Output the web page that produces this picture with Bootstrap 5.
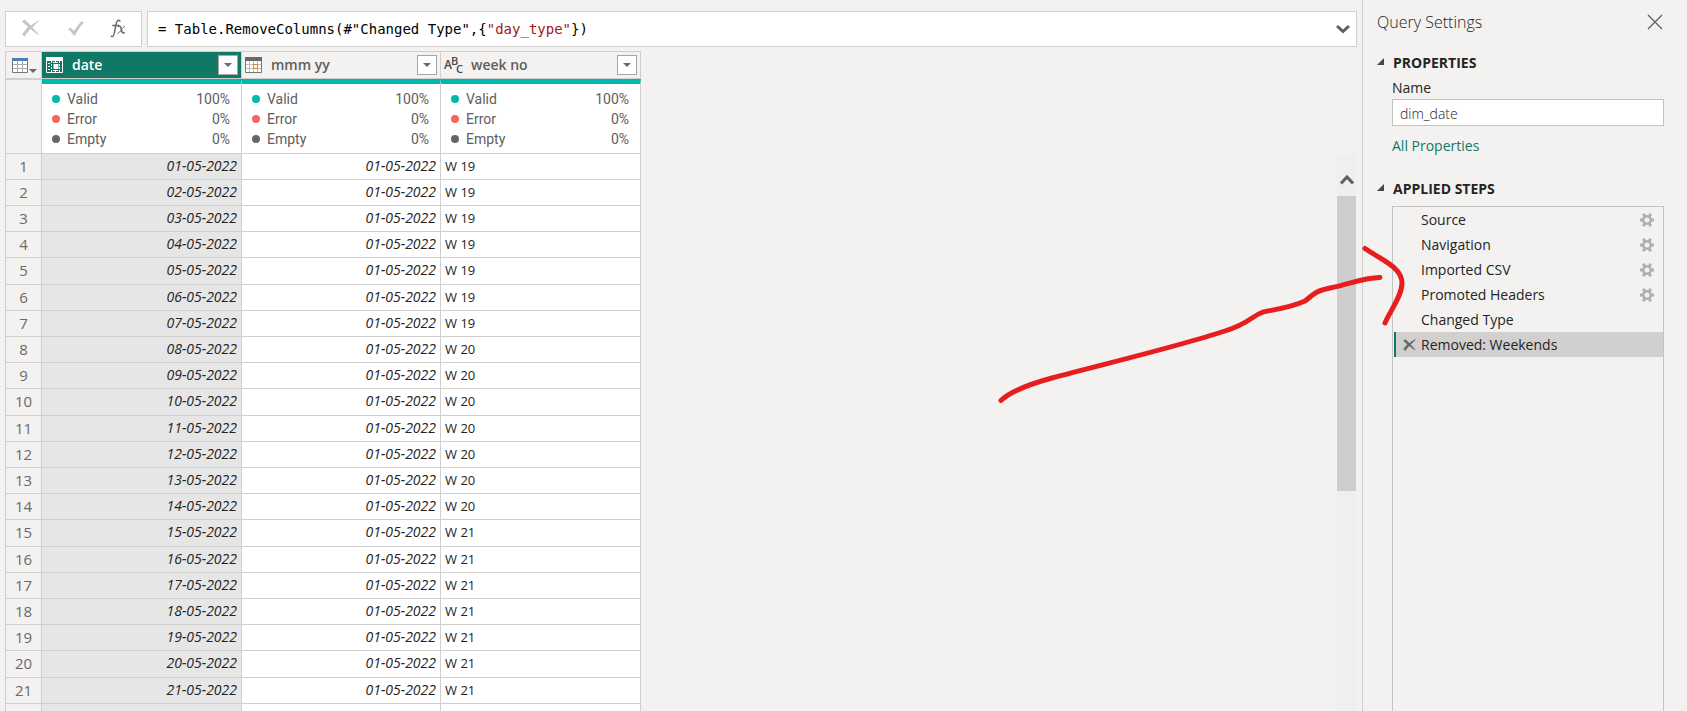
<!DOCTYPE html>
<html lang="en">
<head>
<meta charset="utf-8">
<meta name="viewport" content="width=device-width, initial-scale=1">
<title>Query Editor</title>
<link href="https://cdn.jsdelivr.net/npm/bootstrap@5.3.0/dist/css/bootstrap.min.css" rel="stylesheet">
<style>
  :root { --line: #d0cfcd; --pane: #f3f2f1; --green: #117865; --teal: #01b8aa; }
  body { background: var(--pane); font-family: "Open Sans", "Noto Sans", sans-serif; font-size: 14px; line-height: 20px; color: #252423; }
  svg { display: block; }
  .bare { border: 0; padding: 0; background: none; }

  /* Formula bar */
  .editor { padding: 11px 5px 0; }
  .bar { height: 36px; background: #fff; border: 1px solid var(--line); }
  .bar-tools { width: 137px; padding: 0 15px 2px; }
  .bar-formula { padding: 0 6px 0 10px; font: 14px/20px "DejaVu Sans Mono", monospace; color: #000; white-space: nowrap; }
  .str { color: #a31515; }

  /* Data grid */
  .data-grid { width: 636px; table-layout: fixed; border-collapse: separate; border-spacing: 0; font-size: 13px; border-left: 1px solid var(--line); }
  .data-grid th, .data-grid td { padding: 0; border-right: 1px solid var(--line); border-bottom: 1px solid var(--line); }
  .data-grid thead th { height: 28px; border-top: 1px solid var(--line); background: var(--pane); font-size: 14px; font-weight: 600; color: #605e5c; }
  .data-grid thead th.picked { background: var(--green); color: #fff; }
  .c-num { width: 36px; } .c-date { width: 200px; } .c-month { width: 199px; }
  .head { height: 26px; padding: 0 3px 0 4px; }
  .head-name { margin-left: 9px; }
  .drop { width: 20px; height: 20px; background: #fff; border: 1px solid #a6a6a6; padding: 0; }
  .data-grid .num { background: var(--pane); text-align: center; font-size: 15px; font-weight: 400; color: #6b6967; }
  .data-grid tbody td { height: 26px; line-height: 22px; background: #fff; padding: 0 4px 2px; }
  .data-grid tbody tr:nth-child(5n) td { height: 27px; }
  .data-grid tbody td.date { text-align: right; font-style: italic; font-size: 14px; }
  .data-grid tbody td.picked { background: #e6e6e6; }
  .data-grid .quality { background: #fff; vertical-align: top; border-top: 5px solid var(--teal); }
  .quality ul { padding: 5px 11px 4px 10px; font: 14px/20px Roboto, sans-serif; color: #605e5c; }
  .dot { width: 8px; height: 8px; margin-right: 7px; }
  .d-ok { background: var(--teal); } .d-err { background: #fd625e; } .d-empty { background: #666; }

  /* Scroll bar */
  .scroller { width: 19px; margin: 103px 1px 0 0; background: #efefef; }
  .thumb { height: 295px; background: #cdcdcd; }

  /* Query settings */
  .settings { width: 325px; border-left: 1px solid var(--line); padding: 11px 23px 0 14px; }
  .settings h1 { font-size: 16px; line-height: 22px; font-weight: 300; }
  .settings h2 { font-size: 14px; line-height: 22px; font-weight: 700; gap: 9px; }
  .settings h2 svg { margin-bottom: 4px; }
  .indent { margin-left: 15px; }
  .name-box { height: 27px; border: 1px solid #c3c2c0; border-radius: 0; padding: 2px 7px 0; font-size: 14px; font-weight: 300; color: #252423; }
  .settings a { color: var(--green); text-decoration: none; }
  .steps { border: 1px solid #c3c2c0; border-bottom: 0; }
  .steps li { height: 25px; padding: 0 9px 0 28px; }
  .steps li.now { background: #d2d0ce; border-left: 2px solid var(--green); margin-left: 1px; padding-left: 7px; }
  .steps li.now .bare { width: 18px; }

  .ink { right: 279px; top: 240px; pointer-events: none; }
</style>
</head>
<body>
<svg width="0" height="0" class="position-absolute" aria-hidden="true">
  <symbol id="gear" viewBox="0 0 14 14">
    <circle cx="7" cy="7" r="3.800" fill="none" stroke="#b0afad" stroke-width="2.600"/>
    <path stroke="#b0afad" stroke-width="3" d="M0 7h2.500M11.500 7H14M3.300 .8l1.400 2.400M10.700 .8L9.300 3.200M3.300 13.200l1.400-2.400M10.700 13.200l-1.400-2.400"/>
  </symbol>
  <symbol id="caret" viewBox="0 0 8 4"><path fill="#6b6967" d="M0 0h8L4 4z"/></symbol>
  <symbol id="fold" viewBox="0 0 7 7"><path fill="#4a4846" d="M7 0v7H0z"/></symbol>
</svg>

<div class="d-flex vh-100 overflow-hidden position-relative">
  <main class="editor flex-grow-1 d-flex flex-column overflow-hidden">
    <div class="d-flex flex-shrink-0" style="gap:5px">
      <div class="bar bar-tools d-flex align-items-center justify-content-between">
        <button class="bare" aria-label="Cancel"><svg width="20" height="18" viewBox="0 0 20 18"><path fill="#c8c6c4" d="M1 2.500L3.500 0.500C6 2.500 8 4.500 10 6.500C13 4 16 2 19 1C16 3.500 13.500 6 11.500 8.500C14 11 16 13.500 18.500 16.500C15 14.500 12 12 9.500 10C7 12.500 5 15 3.500 17.500L1 15.500C3 12.500 5 10.500 7 8C5 6 3 4.500 1 2.500z"/></svg></button>
        <button class="bare" aria-label="Accept"><svg width="18" height="16" viewBox="0 0 18 16"><path fill="#c8c6c4" d="M1 9L3.500 7.500L7 11C9.500 7 12 3.500 15 1L17 2.500C13 6.500 10.500 10.500 8 15.500L6.500 15.500C5 13 3.500 11 1 9z"/></svg></button>
        <button class="bare" aria-label="Insert function"><svg width="16" height="19" viewBox="0 0 16 19" fill="none" stroke="#666" stroke-linecap="round"><path stroke-width="1.400" d="M10 2C8.500 0.400 7 1.200 6.400 4L4.300 14C3.800 17 2.500 18 1.200 17.200M2.800 6.500H8.500"/><path stroke-width="1.500" d="M8.600 7.500C10.600 6.400 10.800 8 11.300 10.500C12 13.500 12.400 14.800 14.200 13.600"/><path d="M14.500 7.300C12.800 7.200 10.500 14.200 7.800 14.200"/></svg></button>
      </div>
      <div class="bar bar-formula flex-grow-1 d-flex align-items-center justify-content-between">
        <span>= Table.RemoveColumns(#"Changed Type",{<span class="str">"day_type"</span>})</span>
        <button class="bare" aria-label="Expand formula bar"><svg width="14" height="10" viewBox="0 0 14 10"><path d="M1 2l6 5.500L13 2" fill="none" stroke="#605e5c" stroke-width="3"/></svg></button>
      </div>
    </div>
    <div class="flex-grow-1 d-flex justify-content-between overflow-hidden" style="padding-top:4px">
      <div>
        <table class="data-grid">
          <colgroup><col class="c-num"><col class="c-date"><col class="c-month"><col></colgroup>
          <thead>
            <tr>
              <th><button class="bare d-flex align-items-end" style="gap:1px;padding-left:6px" aria-label="Table menu"><svg width="16" height="15" viewBox="0 0 16 15"><path fill="#fff" stroke="#777" d="M.5.5h15v14H.5z"/><path stroke="#aaa" d="M5.500 3v11M10.500 3v11M1 6.500h14M1 10.500h14"/><path fill="#4a7ebb" d="M0 0h16v3H0z"/></svg><svg width="8" height="4"><use href="#caret"/></svg></button></th>
              <th class="picked"><div class="head d-flex align-items-center"><svg width="17" height="16" viewBox="0 0 17 16"><path fill="none" stroke="#fff" d="M.5.500h16v15H.5z"/><path fill="#fff" d="M0 0h17v4H0zM7.500 7h5v5h-5z"/><path stroke="#fff" d="M5.500 4v2M5.500 7v2M5.500 10v2M5.500 13v2M9.500 4v2M9.500 13v2M13.500 4v2M13.500 7v2M13.500 10v2M13.500 13v2M2 6.500h2M2 9.500h2M2 12.500h2M7 5.500h5M7 13.500h5"/></svg><span class="head-name flex-grow-1">date</span><button class="drop d-flex align-items-center justify-content-center" aria-label="Filter date"><svg width="8" height="4"><use href="#caret"/></svg></button></div></th>
              <th><div class="head d-flex align-items-center" style="padding-left:3px"><svg width="17" height="16" viewBox="0 0 17 16"><path fill="#fff" stroke="#777" d="M.5.500h16v15H.5z"/><path stroke="#bbb" d="M4.500 4v11M8.500 4v11M12.500 4v11M1 7.500h15M1 11.500h15"/><path fill="#6b6967" d="M0 0h17v4H0z"/><path fill="#fff" stroke="#e07b2a" d="M8.500 7.500h4v4h-4z"/></svg><span class="head-name flex-grow-1">mmm yy</span><button class="drop d-flex align-items-center justify-content-center" aria-label="Filter mmm yy"><svg width="8" height="4"><use href="#caret"/></svg></button></div></th>
              <th><div class="head d-flex align-items-center" style="padding-left:3px"><svg width="18" height="18" viewBox="0 0 18 18" font-family="Open Sans, sans-serif" font-weight="600" fill="#484644" style="overflow:visible"><text x="0" y="13" font-size="12">A</text><text x="7" y="9" font-size="11">B</text><text x="12" y="17" font-size="11">C</text></svg><span class="head-name flex-grow-1">week no</span><button class="drop d-flex align-items-center justify-content-center" aria-label="Filter week no"><svg width="8" height="4"><use href="#caret"/></svg></button></div></th>
            </tr>
            <tr id="quality"><th class="num"></th></tr>
          </thead>
          <tbody id="rows"></tbody>
        </table>
      </div>
      <div class="scroller flex-shrink-0" aria-hidden="true">
        <div class="d-flex justify-content-center" style="padding:20px 0 11px"><svg width="14" height="11" viewBox="0 0 14 11"><path d="M1 9.500l6-6.500L13 9.500" fill="none" stroke="#606060" stroke-width="3"/></svg></div>
        <div class="thumb"></div>
      </div>
    </div>
  </main>

  <aside class="settings flex-shrink-0 d-flex flex-column">
    <div class="d-flex justify-content-between align-items-center">
      <h1 class="m-0">Query Settings</h1>
      <button class="bare" style="padding-right:1px" aria-label="Close"><svg width="16" height="16" viewBox="0 0 16 16"><path d="M1 1l14 14M15 1L1 15" stroke="#605e5c" stroke-width="1.300"/></svg></button>
    </div>
    <h2 class="d-flex align-items-center mb-0" style="margin-top:19px"><svg width="7" height="7"><use href="#fold"/></svg>PROPERTIES</h2>
    <div class="indent">
      <label for="qname" class="d-block" style="padding:4px 0 1px">Name</label>
      <input id="qname" class="form-control name-box" value="dim_date">
      <a href="#" class="d-inline-block" style="margin-top:10px">All Properties</a>
    </div>
    <h2 class="d-flex align-items-center" style="margin:22px 0 6px"><svg width="7" height="7"><use href="#fold"/></svg>APPLIED STEPS</h2>
    <ul class="steps indent list-unstyled mb-0 flex-grow-1">
      <li class="d-flex align-items-center justify-content-between">Source<button class="bare" aria-label="Edit Source"><svg width="14" height="14"><use href="#gear"/></svg></button></li>
      <li class="d-flex align-items-center justify-content-between">Navigation<button class="bare" aria-label="Edit Navigation"><svg width="14" height="14"><use href="#gear"/></svg></button></li>
      <li class="d-flex align-items-center justify-content-between">Imported CSV<button class="bare" aria-label="Edit Imported CSV"><svg width="14" height="14"><use href="#gear"/></svg></button></li>
      <li class="d-flex align-items-center justify-content-between">Promoted Headers<button class="bare" aria-label="Edit Promoted Headers"><svg width="14" height="14"><use href="#gear"/></svg></button></li>
      <li class="d-flex align-items-center">Changed Type</li>
      <li class="now d-flex align-items-center"><button class="bare" aria-label="Delete step"><svg width="13" height="12" viewBox="0 0 20 18"><path fill="#666" stroke="#666" d="M1 2.500L3.500 0.500C6 2.500 8 4.500 10 6.500C13 4 16 2 19 1C16 3.500 13.500 6 11.500 8.500C14 11 16 13.500 18.500 16.500C15 14.500 12 12 9.500 10C7 12.500 5 15 3.500 17.500L1 15.500C3 12.500 5 10.500 7 8C5 6 3 4.500 1 2.500z"/></svg></button>Removed: Weekends</li>
    </ul>
  </aside>

  <!-- Hand-drawn pointer to the applied steps -->
  <svg class="ink position-absolute" width="418" height="170" viewBox="990 240 418 170" fill="none" stroke="#e81e1e" stroke-width="5" stroke-linecap="round" stroke-linejoin="round" aria-hidden="true">
    <path d="M1001 400.500C1010 392 1030 384 1052 378C1100 365 1180 346 1225 331C1250 323 1250 317 1263 312C1271 310 1290 308 1305 301C1312 296 1314 291 1330 288C1350 284 1362 278 1380 277.500"/>
    <path d="M1365 248.500C1380 259 1402 267 1402 283C1402 296 1390 311 1385 323"/>
  </svg>
</div>

<script src="https://cdn.jsdelivr.net/npm/bootstrap@5.3.0/dist/js/bootstrap.bundle.min.js"></script>
<script>
  const quality = [['ok', 'Valid', '100%'], ['err', 'Error', '0%'], ['empty', 'Empty', '0%']];
  const items = quality.map(([k, name, share]) =>
    `<li class="d-flex align-items-center"><span class="dot d-${k} rounded-circle"></span><span class="flex-grow-1">${name}</span><span>${share}</span></li>`).join('');
  document.getElementById('quality').insertAdjacentHTML('beforeend',
    `<td class="quality"><ul class="list-unstyled mb-0">${items}</ul></td>`.repeat(3));

  let html = '';
  for (let n = 1; n <= 21; n++) {
    const day = String(n).padStart(2, '0');
    const week = n < 8 ? 19 : n < 15 ? 20 : 21;
    html += `<tr><td class="num">${n}</td><td class="date picked">${day}-05-2022</td><td class="date">01-05-2022</td><td>W ${week}</td></tr>`;
  }
  // Empty row that closes the preview
  html += '<tr><td class="num"></td><td class="picked"></td><td></td><td></td></tr>';
  document.getElementById('rows').innerHTML = html;
</script>
</body>
</html>
